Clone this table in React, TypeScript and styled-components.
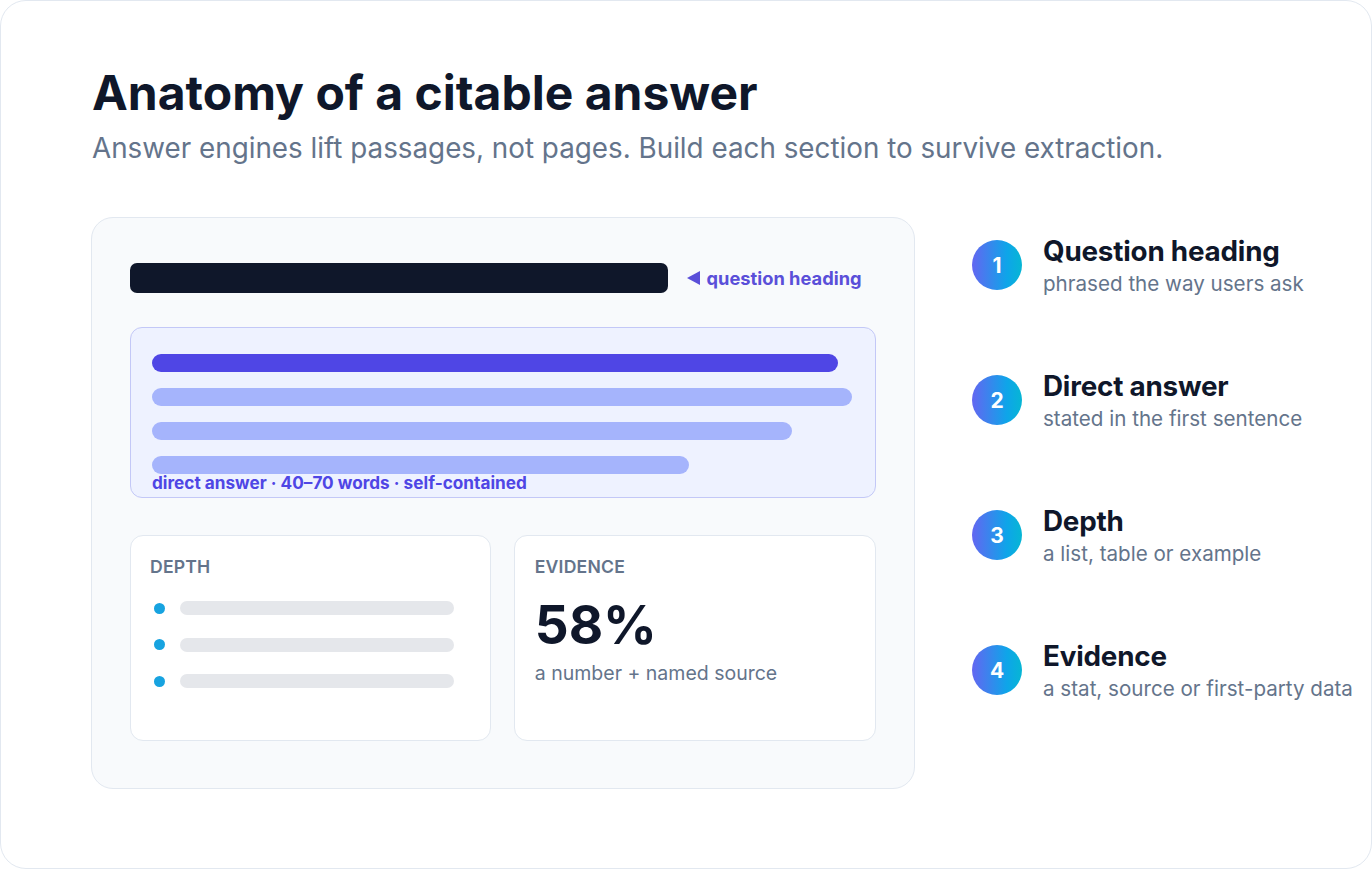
import React from "react";
import styled, { createGlobalStyle } from "styled-components";

const Global = createGlobalStyle`
  * { box-sizing: border-box; }
  html, body { margin: 0; padding: 0; background: #ffffff; }
  body { font-family: Inter, "Noto Sans", sans-serif; -webkit-font-smoothing: antialiased; }
`;

const Frame = styled.div`
  width: 1372px;
  height: 869px;
  border: 1.5px solid #e2e8f0;
  border-radius: 26px;
  background: #ffffff;
  padding: 62px 10px 0 90px;
`;

const Title = styled.h1`
  margin: 0;
  padding-left: 1px;
  font-size: 48px;
  line-height: 60px;
  font-weight: 700;
  color: #0f172a;
  letter-spacing: 0;
`;

const Subtitle = styled.p`
  margin: 7px 0 0 0;
  padding-left: 1px;
  font-size: 27.8px;
  line-height: 36px;
  font-weight: 400;
  color: #64748b;
`;

const Main = styled.div`
  display: grid;
  grid-template-columns: 824px 1fr;
  column-gap: 57px;
  margin-top: 51px;
`;

const Panel = styled.div`
  height: 572px;
  background: #f8fafc;
  border: 1.5px solid #e2e8f0;
  border-radius: 22px;
  padding: 45px 38px 0 37.5px;
  display: flex;
  flex-direction: column;
`;

const HeadingRow = styled.div`
  display: flex;
  align-items: center;
  gap: 19px;
`;

const HeadingBar = styled.div`
  width: 538px;
  height: 30px;
  border-radius: 7px;
  background: #0f172a;
`;

const Callout = styled.div`
  display: flex;
  align-items: center;
  gap: 7px;
  font-size: 18.3px;
  font-weight: 700;
  color: #5a4fd9;
`;

const AnswerBox = styled.div`
  margin-top: 34px;
  height: 171px;
  border: 1.5px solid #c3c8f7;
  border-radius: 12px;
  background: #eef2ff;
  padding: 26px 22px 0 21.5px;
  display: flex;
  flex-direction: column;
  gap: 16px;
`;

const Line = styled.div<{ $w: number; $strong?: boolean }>`
  width: ${(p) => p.$w}px;
  height: 18px;
  border-radius: 9px;
  background: ${(p) => (p.$strong ? "#4f46e5" : "#a5b4fc")};
`;

const AnswerLabel = styled.div`
  margin-top: -16px;
  font-size: 17.2px;
  line-height: 17px;
  font-weight: 700;
  color: #4f46e5;
`;

const CardRow = styled.div`
  margin-top: 37px;
  display: grid;
  grid-template-columns: 1fr 1fr;
  gap: 23px;
`;

const Card = styled.div`
  height: 206px;
  background: #ffffff;
  border: 1.5px solid #e2e8f0;
  border-radius: 13px;
  padding: 20px 20px 0 19.5px;
`;

const CardLabel = styled.div`
  font-size: 17.6px;
  line-height: 22px;
  font-weight: 600;
  color: #64748b;
  letter-spacing: 0.2px;
`;

const BulletList = styled.div`
  margin-top: 23px;
  display: flex;
  flex-direction: column;
  gap: 22.5px;
`;

const BulletRow = styled.div`
  display: flex;
  align-items: center;
  gap: 15px;
  padding-left: 3.5px;
`;

const Dot = styled.div`
  width: 11px;
  height: 11px;
  border-radius: 50%;
  background: #17a3e0;
`;

const BulletBar = styled.div`
  width: 274px;
  height: 14px;
  border-radius: 7px;
  background: #e5e7eb;
`;

const BigStat = styled.div`
  margin-top: 14px;
  font-size: 53px;
  line-height: 66px;
  font-weight: 700;
  color: #0f172a;
  letter-spacing: 0;
`;

const StatNote = styled.div`
  margin-top: 2px;
  font-size: 19.5px;
  line-height: 26px;
  color: #64748b;
`;

const Steps = styled.div`
  display: flex;
  flex-direction: column;
  gap: 65px;
  padding-top: 13px;
`;

const Step = styled.div`
  display: flex;
  align-items: center;
  gap: 21px;
  height: 70px;
`;

const Badge = styled.div`
  flex: 0 0 50px;
  width: 50px;
  height: 50px;
  border-radius: 50%;
  background: linear-gradient(90deg, #6366f1 0%, #0ea5e9 70%, #06b6d4 100%);
  color: #ffffff;
  font-size: 21px;
  font-weight: 700;
  display: flex;
  align-items: center;
  justify-content: center;
`;

const StepText = styled.div`
  display: flex;
  flex-direction: column;
  gap: 3px;
  white-space: nowrap;
`;

const StepTitle = styled.div`
  font-size: 27.8px;
  line-height: 34px;
  font-weight: 700;
  color: #0f172a;
  letter-spacing: -0.2px;
`;

const StepSub = styled.div`
  font-size: 20.6px;
  line-height: 26px;
  color: #64748b;
`;

const steps = [
  { n: 1, t: "Question heading", s: "phrased the way users ask" },
  { n: 2, t: "Direct answer", s: "stated in the first sentence" },
  { n: 3, t: "Depth", s: "a list, table or example" },
  { n: 4, t: "Evidence", s: "a stat, source or first-party data" },
];

export default function App() {
  return (
    <>
      <Global />
      <Frame>
        <Title>Anatomy of a citable answer</Title>
        <Subtitle>
          Answer engines lift passages, not pages. Build each section to survive extraction.
        </Subtitle>
        <Main>
          <Panel>
            <HeadingRow>
              <HeadingBar />
              <Callout>
                <svg width="13" height="14" viewBox="0 0 13 14">
                  <path d="M0 7 L13 0 L13 14 Z" fill="#5a4fd9" />
                </svg>
                question heading
              </Callout>
            </HeadingRow>
            <AnswerBox>
              <Line $w={686} $strong />
              <Line $w={700} />
              <Line $w={640} />
              <Line $w={537} />
              <AnswerLabel>direct answer · 40–70 words · self-contained</AnswerLabel>
            </AnswerBox>
            <CardRow>
              <Card>
                <CardLabel>DEPTH</CardLabel>
                <BulletList>
                  {[0, 1, 2].map((i) => (
                    <BulletRow key={i}>
                      <Dot />
                      <BulletBar />
                    </BulletRow>
                  ))}
                </BulletList>
              </Card>
              <Card>
                <CardLabel>EVIDENCE</CardLabel>
                <BigStat>58%</BigStat>
                <StatNote>a number + named source</StatNote>
              </Card>
            </CardRow>
          </Panel>
          <Steps>
            {steps.map((st) => (
              <Step key={st.n}>
                <Badge>{st.n}</Badge>
                <StepText>
                  <StepTitle>{st.t}</StepTitle>
                  <StepSub>{st.s}</StepSub>
                </StepText>
              </Step>
            ))}
          </Steps>
        </Main>
      </Frame>
    </>
  );
}
